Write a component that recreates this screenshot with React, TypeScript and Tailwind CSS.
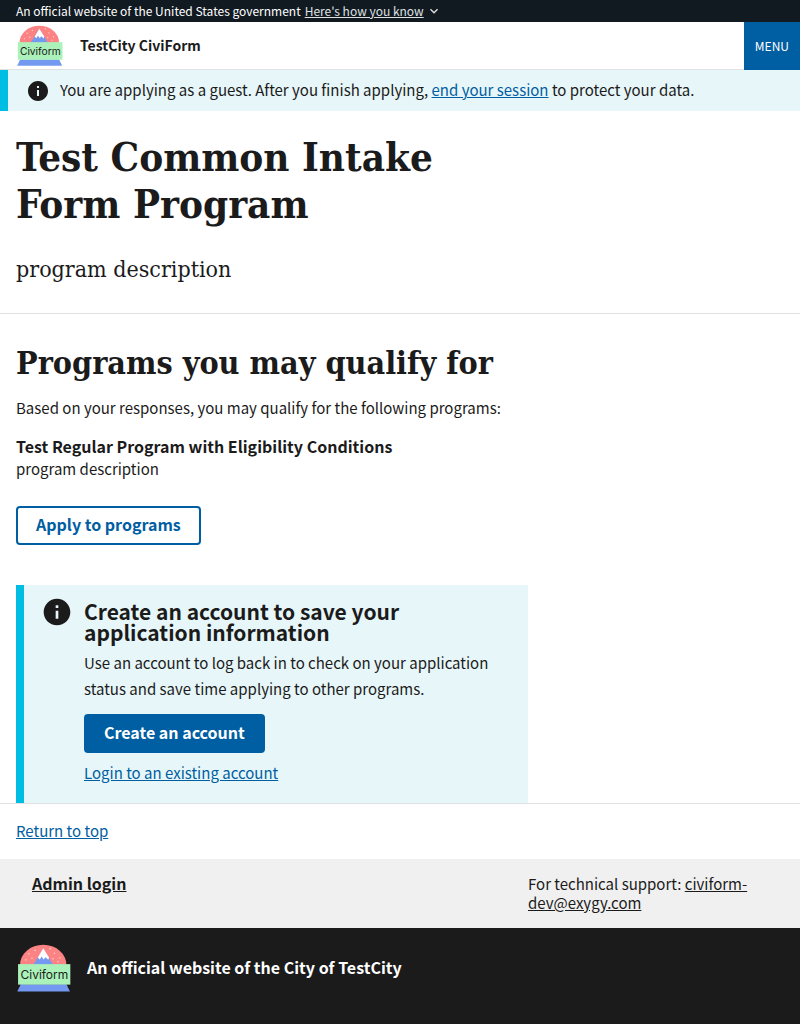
import type { ReactNode } from "react";

function Logo({ className }: { className: string }) {
  return (
    <svg viewBox="0 0 138 124" className={className} role="img" aria-label="Civiform logo">
      <path d="M7 54a60 52 0 0 1 120 0z" fill="#fb8383" />
      <g fill="#fbd5d5">
        <circle cx="30" cy="25" r="2" />
        <circle cx="22" cy="41" r="2" />
        <circle cx="38" cy="37" r="2" />
        <circle cx="46" cy="16" r="2" />
        <circle cx="85" cy="12" r="2" />
        <circle cx="96" cy="24" r="2" />
        <circle cx="92" cy="38" r="2" />
        <circle cx="110" cy="36" r="2" />
        <circle cx="105" cy="46" r="2" />
      </g>
      <path d="M67 12 41 54h52z" fill="#739af0" />
      <path d="M67 11 53 35l5 5 5-8 5 8 5-6 7 7 2-6z" fill="#fff" />
      <path d="M9 104h118l9 19H0z" fill="#739af0" />
      <rect x="2" y="52" width="135" height="53" fill="#aaf2b9" />
      <text
        x="70"
        y="91"
        textAnchor="middle"
        fontSize="31"
        fill="#1b1b1b"
        className="font-['Inter','Liberation_Sans',sans-serif] font-normal"
      >
        Civiform
      </text>
    </svg>
  );
}

function InfoIcon({ className }: { className: string }) {
  return (
    <svg viewBox="0 0 24 24" fill="currentColor" className={className} aria-hidden="true">
      <path d="M12 2C6.48 2 2 6.48 2 12s4.48 10 10 10 10-4.48 10-10S17.52 2 12 2zm1 15h-2v-6h2v6zm0-8h-2V7h2v2z" />
    </svg>
  );
}

function TextLink({ href, children }: { href: string; children: ReactNode }) {
  return (
    <a href={href} className="text-[#005ea2] underline">
      {children}
    </a>
  );
}

export default function App() {
  return (
    <div
      id="top"
      className="flex min-h-screen flex-col bg-white font-['Noto_Sans_CJK_JP','Noto_Sans',sans-serif] text-[15px] leading-[22px] text-[#1b1b1b]"
    >
      <div className="flex items-center bg-[#111921] px-4 text-[12px] leading-[22px] text-white">
        <span>An official website of the United States government</span>
        <button type="button" className="ml-1 flex items-center text-[#dfe1e2]">
          <span className="underline">Here's how you know</span>
          <svg viewBox="0 0 24 24" fill="currentColor" className="ml-0.5 size-4" aria-hidden="true">
            <path d="M16.59 8.59 12 13.17 7.41 8.59 6 10l6 6 6-6z" />
          </svg>
        </button>
      </div>

      <header className="flex h-12 items-stretch">
        <div className="flex grow items-center border-b border-[#dfe1e2] pl-4">
          <Logo className="h-[41px] w-12" />
          <span className="ml-4 pb-0.5 text-[14px] font-bold">TestCity CiviForm</span>
        </div>
        <button type="button" className="bg-[#005ea2] px-[11px] text-[12px] text-white">
          MENU
        </button>
      </header>

      <div className="flex items-center border-l-8 border-[#00bde3] bg-[#e7f6f8] py-2 pl-[18px] leading-[23px]">
        <InfoIcon className="-my-px mr-2.5 size-6 shrink-0" />
        <p className="pb-0.5">
          You are applying as a guest. After you finish applying,{" "}
          <TextLink href="#end-session">end your session</TextLink> to protect your data.
        </p>
      </div>

      <main>
        <div className="border-b border-[#dfe1e2] px-4 pt-[22px] pb-[27px] font-['DejaVu_Serif_Condensed','DejaVu_Serif',serif]">
          <h1 className="max-w-lg text-[40px] leading-[47px] font-bold">
            Test Common Intake
            <br />
            Form Program
          </h1>
          <p className="mt-[25px] text-[23px] leading-[34px]">program description</p>
        </div>

        <div className="px-4 pt-[30px]">
          <h2 className="font-['DejaVu_Serif_Condensed','DejaVu_Serif',serif] text-[32px] leading-[38px] font-bold">
            Programs you may qualify for
          </h2>
          <p className="mt-[15px]">
            Based on your responses, you may qualify for the following programs:
          </p>
          <h3 className="mt-4 text-base leading-[22px] font-bold">
            Test Regular Program with Eligibility Conditions
          </h3>
          <p className="mt-px">program description</p>
          <button
            type="button"
            className="mt-[26px] flex h-[39px] items-center rounded border-2 border-[#005ea2] px-[18px] pb-[3px] text-base leading-[22px] font-bold text-[#005ea2]"
          >
            Apply to programs
          </button>

          <section className="mt-10 flex max-w-lg border-l-8 border-[#00bde3] bg-[#e7f6f8] pt-[11px] pr-5 pb-[19px] pl-[17px]">
            <InfoIcon className="size-8 shrink-0" />
            <div className="ml-[11px] pt-[5px]">
              <h2 className="text-[21px] leading-[21px] font-bold">
                Create an account to save your application information
              </h2>
              <p className="mt-[7px] leading-[26px]">
                Use an account to log back in to check on your application status and save time
                applying to other programs.
              </p>
              <button
                type="button"
                className="mt-3 mb-[9px] flex h-[39px] items-center rounded bg-[#005ea2] px-5 pb-[3px] text-base leading-[22px] font-bold text-white"
              >
                Create an account
              </button>
              <TextLink href="#login">Login to an existing account</TextLink>
            </div>
          </section>
        </div>
      </main>

      <footer className="flex grow flex-col border-t border-[#dfe1e2]">
        <div className="px-4 pt-4 pb-[17px]">
          <TextLink href="#top">Return to top</TextLink>
        </div>
        <div className="grid grid-cols-3 bg-[#f0f0f0] px-4 pt-[15px] pb-4 leading-[19px]">
          <div className="col-span-2 pl-4 text-base leading-[19px] font-bold">
            <a href="#admin" className="underline">
              Admin login
            </a>
          </div>
          <p>
            For technical support:{" "}
            <a href="mailto:civiform-dev@exygy.com" className="underline">
              civiform-dev@exygy.com
            </a>
          </p>
        </div>
        <div className="flex grow items-start bg-[#1b1b1b] px-4 py-4 text-base leading-[22px] font-bold text-white">
          <Logo className="h-12 w-14" />
          <p className="ml-[15px] pt-3">An official website of the City of TestCity</p>
        </div>
      </footer>
    </div>
  );
}
